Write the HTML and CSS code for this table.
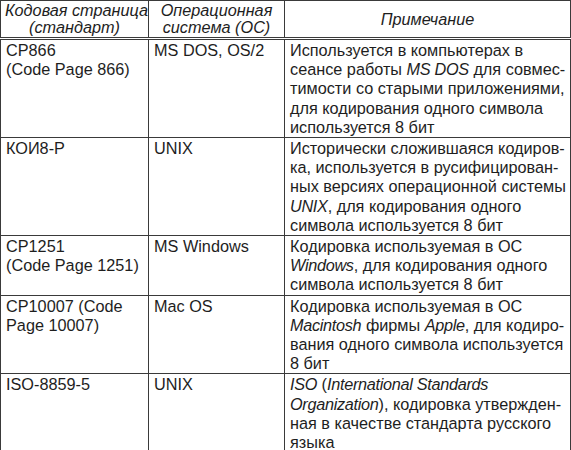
FILE: index.html
```html
<!DOCTYPE html>
<html lang="ru">
<head>
<meta charset="utf-8">
<link rel="stylesheet" href="styles.css">
</head>
<body>
<table class="enc">
  <colgroup>
    <col class="c1">
    <col class="c2">
    <col class="c3">
  </colgroup>
  <thead>
    <tr>
      <th>Кодовая страница<br>(стандарт)</th>
      <th>Операционная<br>система (ОС)</th>
      <th>Примечание</th>
    </tr>
  </thead>
  <tbody>
    <tr class="r1">
      <td>CP866<br>(Code Page 866)</td>
      <td>MS DOS, OS/2</td>
      <td>Используется в компьютерах в<br>сеансе работы <i>MS DOS</i> для совмес-<br>тимости со старыми приложениями,<br>для кодирования одного символа<br>используется 8 бит</td>
    </tr>
    <tr class="r2">
      <td>КОИ8-Р</td>
      <td>UNIX</td>
      <td>Исторически сложившаяся кодиров-<br>ка, используется в русифицирован-<br>ных версиях операционной системы<br><i>UNIX</i>, для кодирования одного<br>символа используется 8 бит</td>
    </tr>
    <tr class="r3">
      <td>CP1251<br>(Code Page 1251)</td>
      <td>MS Windows</td>
      <td>Кодировка используемая в ОС<br><i>Windows</i>, для кодирования одного<br>символа используется 8 бит</td>
    </tr>
    <tr class="r4">
      <td>CP10007 (Code<br>Page 10007)</td>
      <td>Mac OS</td>
      <td>Кодировка используемая в ОС<br><i>Macintosh</i> фирмы <i>Apple</i>, для кодиро-<br>вания одного символа используется<br>8 бит</td>
    </tr>
    <tr class="r5">
      <td>ISO-8859-5</td>
      <td>UNIX</td>
      <td><i>ISO</i> (<i>International Standards<br>Organization</i>), кодировка утвержден-<br>ная в качестве стандарта русского<br>языка</td>
    </tr>
  </tbody>
</table>
</body>
</html>
```

FILE: styles.css
```css
html, body {
  margin: 0;
  padding: 0;
  background: #ffffff;
}

.enc {
  border-collapse: collapse;
  table-layout: fixed;
  width: 570px;
  font-family: "Liberation Sans", Arial, sans-serif;
  font-size: 16.25px;
  color: #1e1e1e;
}

.c1 { width: 148px; }
.c2 { width: 136px; }
.c3 { width: 286px; }

.enc th,
.enc td {
  border: 1px solid #3a3a3a;
  vertical-align: top;
  text-align: left;
  white-space: nowrap;
}

.enc th {
  font-weight: normal;
  font-style: italic;
  text-align: center;
  vertical-align: middle;
  line-height: 17px;
  height: 36px;
  padding: 0 4px;
  border-bottom: 3px double #3a3a3a;
}

.enc td {
  line-height: 19.2px;
  padding: 1px 5px 0 5px;
}

.enc td i {
  font-style: italic;
  letter-spacing: -0.3px;
}
```
